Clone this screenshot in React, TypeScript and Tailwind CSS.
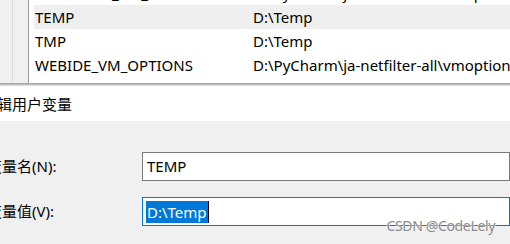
import React from 'react'

const rows = [
  { name: 'RUBYMINE_VM_OPTIONS', value: 'D:\\PyCharm\\ja-netfilter-all\\vmoptions\\rubymine.vmoptions', active: false },
  { name: 'TEMP', value: 'D:\\Temp', active: true },
  { name: 'TMP', value: 'D:\\Temp', active: false },
  { name: 'WEBIDE_VM_OPTIONS', value: 'D:\\PyCharm\\ja-netfilter-all\\vmoptions\\webide.vmoptions', active: false },
  { name: 'WEBSTORM_VM_OPTIONS', value: 'D:\\PyCharm\\ja-netfilter-all\\vmoptions\\webstorm.vmoptions', active: false },
]

const App = () => {
  return (
    <div
      className='relative w-[510px] h-[244px] overflow-hidden bg-[#f0f0f0] text-black'
      style={{ fontFamily: '"Noto Sans", "Noto Sans CJK SC", sans-serif' }}
    >
      {/* variable list behind the dialog */}
      <div className='flex h-[83px] overflow-hidden bg-white'>
        <div className='w-[13px] shrink-0 bg-[#f0f0f0] border-r border-[#dcdcdc]'></div>
        <div className='w-[16px] shrink-0 bg-[#f0f0f0] border-r border-[#a0a0a0]'></div>
        <div className='flex-1 pl-[5px] -mt-[19px]'>
          {rows.map((row) => (
            <div
              key={row.name}
              className={`flex items-center h-[24px] text-[15px] whitespace-nowrap ${row.active ? 'bg-[#efefef]' : ''}`}
            >
              <span className='w-[219px] shrink-0 pl-[1px]'>{row.name}</span>
              <span>{row.value}</span>
            </div>
          ))}
        </div>
      </div>
      <div className='h-[3px] bg-gradient-to-b from-[#9a9a9a] to-[#e8e8e8]'></div>

      {/* edit dialog */}
      <div className='flex items-center h-[35px] bg-white pt-[2px] text-[15px] whitespace-nowrap'>
        <span className='-ml-[18px]'>编辑用户变量</span>
      </div>
      <div className='pt-[31px] text-[15px]'>
        <div className='flex items-center h-[29px]'>
          <span className='w-[142px] shrink-0 -ml-[13px] pr-[13px] box-content whitespace-nowrap'>变量名(N):</span>
          <div className='flex-1 h-[29px] border border-[#7a7a7a] bg-white flex items-center pl-[4px]'>
            TEMP
          </div>
        </div>
        <div className='flex items-center h-[29px] mt-[16px]'>
          <span className='w-[142px] shrink-0 -ml-[13px] pr-[13px] box-content whitespace-nowrap'>变量值(V):</span>
          <div className='flex-1 h-[29px] border border-[#0078d7] bg-white flex items-center pl-[3px]'>
            <span className='bg-[#0078d7] text-white px-[1px] leading-[22px]'>D:\Temp</span>
            <span className='w-[1px] h-[22px] bg-black'></span>
          </div>
        </div>
      </div>

      <div
        className='absolute right-[15px] bottom-[8px] text-[14px] text-[#8a8a8a] tracking-tight'
        style={{ textShadow: '0 0 2px #fff, 0 0 1px #fff' }}
      >
        CSDN @CodeLely
      </div>
    </div>
  )
}

export default App
